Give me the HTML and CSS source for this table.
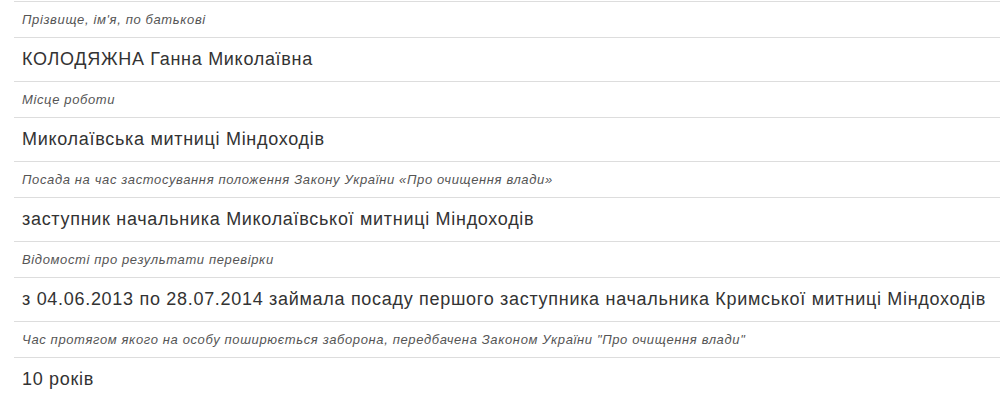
FILE: index.html
```html
<!DOCTYPE html>
<html lang="uk">
<head>
<meta charset="utf-8">
<link rel="stylesheet" href="styles.css">
</head>
<body>
<div class="info">
  <div class="row label">Прізвище, ім'я, по батькові</div>
  <div class="row value">КОЛОДЯЖНА Ганна Миколаївна</div>
  <div class="row label">Місце роботи</div>
  <div class="row value">Миколаївська митниці Міндоходів</div>
  <div class="row label">Посада на час застосування положення Закону України «Про очищення влади»</div>
  <div class="row value">заступник начальника Миколаївської митниці Міндоходів</div>
  <div class="row label">Відомості про результати перевірки</div>
  <div class="row value">з 04.06.2013 по 28.07.2014 займала посаду першого заступника начальника Кримської митниці Міндоходів</div>
  <div class="row label">Час протягом якого на особу поширюється заборона, передбачена Законом України "Про очищення влади"</div>
  <div class="row value">10 років</div>
</div>
</body>
</html>
```
FILE: styles.css
```css
html, body {
  margin: 0;
  padding: 0;
  background: #fff;
}
body {
  font-family: "Liberation Sans", Arial, sans-serif;
  color: #333;
}
.info {
  margin: 1px 0 0 14px;
  display: flex;
  flex-direction: column;
}
.row {
  border-top: 1px solid #ddd;
  padding: 0 8px;
  display: flex;
  align-items: center;
  white-space: nowrap;
}
.label {
  height: 35px;
  font-size: 13px;
  letter-spacing: 0.63px;
  font-style: italic;
  color: #555;
}
.value {
  height: 43px;
  font-size: 18px;
  letter-spacing: 0.7px;
  color: #333;
}
```
